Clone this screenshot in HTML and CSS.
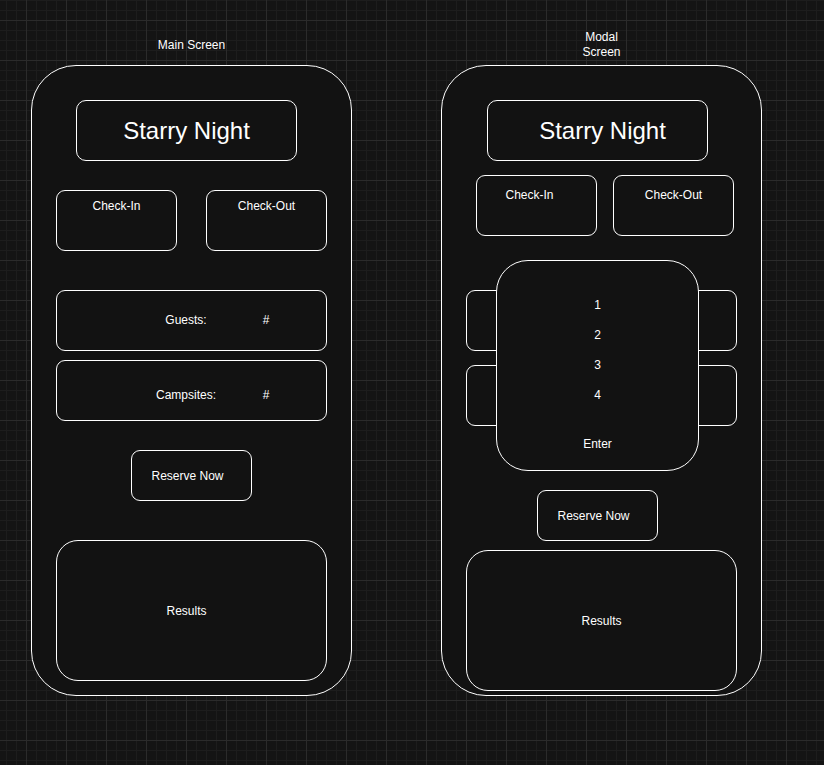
FILE: index.html
```html
<!DOCTYPE html>
<html lang="en">
<head>
  <meta charset="UTF-8">
  <title>Starry Night - Wireframes</title>
  <link rel="stylesheet" href="styles.css">
</head>
<body>
  <div class="board">

    <section class="screen">
      <div class="screen-label">Main Screen</div>
      <div class="phone">
        <div class="box title-box">Starry Night</div>

        <div class="date-row">
          <div class="box date-box">Check-In</div>
          <div class="box date-box">Check-Out</div>
        </div>

        <div class="box count-box guests">
          <span class="count-label">Guests:</span>
          <span class="count-value">#</span>
        </div>
        <div class="box count-box campsites">
          <span class="count-label">Campsites:</span>
          <span class="count-value">#</span>
        </div>

        <div class="box reserve-btn">Reserve Now</div>

        <div class="box results-box">Results</div>
      </div>
    </section>

    <section class="screen modal-screen">
      <div class="screen-label">Modal<br>Screen</div>
      <div class="phone">
        <div class="box title-box">Starry Night</div>

        <div class="date-row">
          <div class="box date-box">Check-In</div>
          <div class="box date-box">Check-Out</div>
        </div>

        <div class="box count-box guests"></div>
        <div class="box count-box campsites"></div>

        <div class="box reserve-btn">Reserve Now</div>

        <div class="box results-box">Results</div>

        <div class="picker">
          <div class="picker-item">1</div>
          <div class="picker-item">2</div>
          <div class="picker-item">3</div>
          <div class="picker-item">4</div>
          <div class="picker-enter">Enter</div>
        </div>
      </div>
    </section>

  </div>
</body>
</html>
```

FILE: styles.css
```css
* {
  box-sizing: border-box;
}

body {
  margin: 0;
  width: 824px;
  height: 765px;
  overflow: hidden;
  color: #ffffff;
  font-family: 'Liberation Sans', Arial, Helvetica, sans-serif;
  font-size: 12px;
  background-color: #141414;
  background-image:
    linear-gradient(#2b2b2b 1px, transparent 1px),
    linear-gradient(90deg, #2b2b2b 1px, transparent 1px),
    linear-gradient(#1d1d1d 1px, transparent 1px),
    linear-gradient(90deg, #1d1d1d 1px, transparent 1px);
  background-size: 40px 40px, 40px 40px, 10px 10px, 10px 10px;
  background-position: 26px 20px, 26px 20px, 26px 20px, 26px 20px;
}

.board {
  display: flex;
  gap: 89px;
  padding-left: 31px;
}

.screen {
  width: 321px;
  display: flex;
  flex-direction: column;
}

.screen-label {
  height: 28px;
  margin: 31px 0 6px;
  display: flex;
  align-items: center;
  justify-content: center;
  text-align: center;
  line-height: 15px;
}

.phone {
  position: relative;
  height: 631px;
  border: 1px solid #ffffff;
  border-radius: 45px;
  background: #121212;
  padding-left: 24px;
  display: flex;
  flex-direction: column;
  align-items: flex-start;
}

.box {
  border: 1px solid #ffffff;
  border-radius: 9px;
  background: #121212;
  line-height: 14px;
}

/* title */
.title-box {
  width: 221px;
  height: 61px;
  margin: 34px 0 0 20px;
  border-radius: 10px;
  font-size: 24px;
  line-height: 28px;
  display: flex;
  align-items: center;
  justify-content: center;
}

/* check-in / check-out */
.date-row {
  display: flex;
  gap: 29px;
  margin-top: 29px;
}

.date-box {
  width: 121px;
  height: 61px;
  padding-top: 8px;
  text-align: center;
}

/* guests / campsites */
.count-box {
  width: 271px;
  height: 61px;
  display: flex;
  align-items: center;
  padding-left: 79px;
}

.count-box.guests {
  margin-top: 39px;
  padding-bottom: 1px;
}

.count-box.campsites {
  margin-top: 9px;
  padding-top: 9px;
}

.count-label {
  width: 100px;
  text-align: center;
}

.count-value {
  width: 20px;
  margin-left: 20px;
  text-align: center;
}

.reserve-btn {
  width: 121px;
  height: 51px;
  margin: 29px 0 0 75px;
  padding-right: 8px;
  display: flex;
  align-items: center;
  justify-content: center;
}

.results-box {
  width: 271px;
  height: 141px;
  margin-top: 39px;
  border-radius: 22px;
  padding-right: 10px;
  display: flex;
  align-items: center;
  justify-content: center;
}

/* modal screen variant */
.modal-screen .title-box {
  margin-left: 21px;
  padding-left: 10px;
}

.modal-screen .date-row {
  margin: 14px 0 0 10px;
  gap: 16px;
}

.modal-screen .date-box {
  padding-top: 12px;
}

.modal-screen .date-box:first-child {
  padding-right: 14px;
}

.modal-screen .count-box.guests {
  margin-top: 54px;
}

.modal-screen .count-box.campsites {
  margin-top: 14px;
}

.modal-screen .reserve-btn {
  margin: 64px 0 0 71px;
}

.modal-screen .results-box {
  margin-top: 9px;
  padding-right: 0;
}

.picker {
  position: absolute;
  left: 54px;
  top: 194px;
  width: 203px;
  height: 211px;
  border: 1px solid #ffffff;
  border-radius: 32px;
  background: #121212;
  padding-top: 29px;
  display: flex;
  flex-direction: column;
  align-items: center;
}

.picker-item {
  line-height: 30px;
}

.picker-enter {
  margin-top: 27px;
  line-height: 15px;
}
```
